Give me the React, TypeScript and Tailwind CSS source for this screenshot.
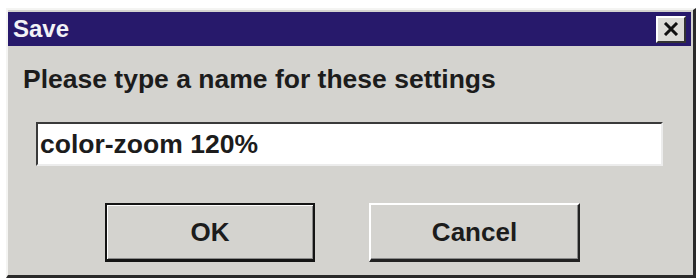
import React from 'react';

export default function App() {
  const font = { fontFamily: '"Liberation Sans", Arial, sans-serif' };

  return (
    <div className="w-[698px] h-[279px] bg-white overflow-hidden pt-[8px] pl-[6px]" style={font}>
      <div className="w-[690px] h-[270px] bg-[#d4d3cf] border-t-2 border-l-2 border-t-[#f4f4f2] border-l-[#f4f4f2] border-r-[3px] border-b-[3px] border-r-[#2a2a2a] border-b-[#2a2a2a] pt-[2px] pr-[2px] flex flex-col">
        {/* TITLE BAR */}
        <div className="h-[34px] bg-[#27196b] flex items-center justify-between pl-[5px] pr-[5px]">
          <span className="text-[24px] font-bold leading-none text-[#f2f2f6]">Save</span>
          <button className="w-[30px] h-[27px] bg-[#dcdbd7] border-t-2 border-l-2 border-t-white border-l-white border-r-2 border-b-2 border-r-[#333] border-b-[#333] flex items-center justify-center">
            <svg width="16" height="14" viewBox="0 0 16 14">
              <path d="M2 1 L14 13 M14 1 L2 13" stroke="#111" strokeWidth="3" />
            </svg>
          </button>
        </div>

        {/* PROMPT */}
        <div className="mt-[18px] pl-[15px] text-[26.5px] font-bold leading-[30px] text-[#1c1c1c]">
          Please type a name for these settings
        </div>

        {/* INPUT */}
        <div className="mt-[28px] ml-[28px] w-[627px] h-[44px] bg-white border-t-2 border-l-2 border-t-[#3a3a3a] border-l-[#3a3a3a] border-r-2 border-b-2 border-r-[#ececec] border-b-[#ececec] pl-[2px] flex items-center">
          <span className="text-[26.5px] font-bold leading-[30px] text-[#1c1c1c]">color-zoom 120%</span>
        </div>

        {/* BUTTONS */}
        <div className="mt-[37px] ml-[97px] flex gap-[54px]">
          <button className="w-[210px] h-[59px] bg-[#d4d3cf] border-2 border-[#141414] border-b-[3px] shadow-[inset_1px_1px_0_#ffffff,inset_-1px_-1px_0_#8a8a8a] flex items-center justify-center text-[26px] font-bold text-[#1c1c1c]">
            OK
          </button>
          <button className="w-[211px] h-[59px] bg-[#d4d3cf] border-t-2 border-l-2 border-t-white border-l-white border-r-2 border-b-[3px] border-r-[#222] border-b-[#222] shadow-[inset_-1px_-1px_0_#8a8a8a] flex items-center justify-center text-[26px] font-bold text-[#1c1c1c]">
            Cancel
          </button>
        </div>
      </div>
    </div>
  );
}
